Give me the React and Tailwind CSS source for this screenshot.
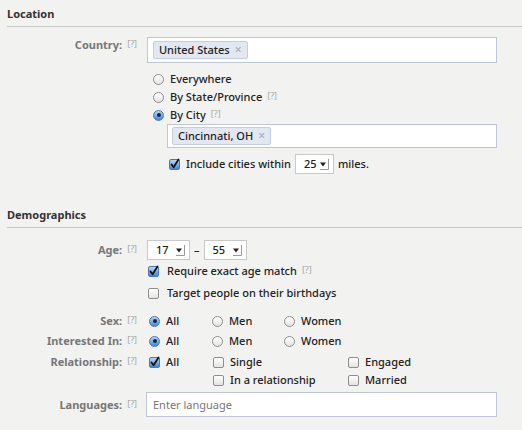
import React from 'react';

const Help = () => (
  <span className="ml-[5px] text-[9px] leading-none font-normal text-[#a8a8a8] relative -top-[2px]">[?]</span>
);

const Radio = ({ checked }) =>
  checked ? (
    <span className="w-[11px] h-[11px] shrink-0 rounded-full border border-[#4a78b8] bg-linear-to-b from-[#b7d6f7] to-[#3f86d8] flex items-center justify-center">
      <span className="w-[4px] h-[4px] rounded-full bg-[#16263a]" />
    </span>
  ) : (
    <span className="w-[11px] h-[11px] shrink-0 rounded-full border border-[#8e8e8e] bg-linear-to-b from-white to-[#e4e4e4]" />
  );

const Check = ({ checked }) =>
  checked ? (
    <span className="w-[11px] h-[11px] shrink-0 rounded-[2px] border border-[#4a78b8] bg-linear-to-b from-[#b7d6f7] to-[#3f86d8] flex items-center justify-center">
      <svg width="11" height="11" viewBox="0 0 11 11" className="overflow-visible">
        <path d="M2.5 5.5 L4.6 8.2 L9.5 0.5" fill="none" stroke="#111" strokeWidth="1.8" strokeLinecap="round" strokeLinejoin="round" />
      </svg>
    </span>
  ) : (
    <span className="w-[11px] h-[11px] shrink-0 rounded-[2px] border border-[#8e8e8e] bg-linear-to-b from-white to-[#e4e4e4]" />
  );

const Arrow = () => (
  <svg width="11" height="13" viewBox="0 0 11 13">
    <path d="M1 4.5 H7 L4 8.5 Z" fill="#222" />
    <path d="M9.5 1 V11.5 H1" fill="none" stroke="#9a9a9a" strokeWidth="1" />
  </svg>
);

const Select = ({ value, w = 'w-[43px]' }) => (
  <div className={`${w} h-[20px] bg-white border border-[#c9c9c9] flex items-center pl-[8px] pr-[3px] justify-between`}>
    <span className="text-[#222]">{value}</span>
    <Arrow />
  </div>
);

const Token = ({ children }) => (
  <span className="h-[18px] px-[5px] flex items-center rounded-[2px] bg-[#e2e7f1] border border-[#c3cce0] text-[#222]">
    {children}
    <span className="ml-[5px] text-[#a3afc8] text-[12px] leading-none">×</span>
  </span>
);

const Label = ({ children, className = '' }) => (
  <div className={`w-[137px] shrink-0 flex justify-end items-baseline ${className}`}>
    <span className="font-bold text-[#777]">{children}</span>
    <Help />
  </div>
);

const Header = ({ children, className = '' }) => (
  <div className={`ml-[7px] pt-[6px] pb-[4px] leading-[16px] border-b border-[#c8c8c8] font-bold text-[#333] ${className}`}>
    {children}
  </div>
);

const Opt = ({ type = 'radio', checked, children, className = '' }) => (
  <div className={`flex items-center gap-[6px] ${className}`}>
    {type === 'radio' ? <Radio checked={checked} /> : <Check checked={checked} />}
    <span>{children}</span>
  </div>
);

export default function App() {
  return (
    <div
      className="w-[522px] h-[430px] overflow-hidden bg-[#f2f2f1] text-[11px] leading-[14px] font-medium text-[#222]"
      style={{ fontFamily: '"Lucida Grande", "Noto Sans", sans-serif' }}
    >
      <Header>Location</Header>

      <div className="flex mt-[10px]">
        <Label className="pt-[1px]">Country:</Label>
        <div className="ml-[10px] w-[350px]">
          <div className="h-[26px] bg-white border border-[#bdc7d8] flex items-center pl-[5px]">
            <Token>United States</Token>
          </div>
          <div className="mt-[7px] ml-[6px]">
            <Opt className="h-[18px]">Everywhere</Opt>
            <Opt className="h-[18px]">
              By State/Province<Help />
            </Opt>
            <Opt className="h-[18px]" checked>
              By City<Help />
            </Opt>
          </div>
          <div className="ml-[20px] w-[330px] h-[24px] bg-white border border-[#bdc7d8] flex items-center pl-[4px]">
            <Token>Cincinnati, OH</Token>
          </div>
          <div className="mt-[6px] ml-[22px] h-[20px] flex items-center">
            <Opt type="check" checked>Include cities within</Opt>
            <div className="ml-[4px]">
              <Select value="25" w="w-[39px]" />
            </div>
            <span className="ml-[4px]">miles.</span>
          </div>
        </div>
      </div>

      <Header className="mt-[27px]">Demographics</Header>

      <div className="flex mt-[12px]">
        <Label className="pt-[3px]">Age:</Label>
        <div className="ml-[10px]">
          <div className="flex items-center">
            <Select value="17" />
            <span className="mx-[4px]">–</span>
            <Select value="55" />
          </div>
          <div className="ml-[1px]">
            <Opt type="check" checked className="h-[22px] gap-[8px]">
              Require exact age match<Help />
            </Opt>
            <Opt type="check" className="h-[22px] gap-[8px]">
              Target people on their birthdays
            </Opt>
          </div>
        </div>
      </div>

      <div className="flex mt-[7px] h-[20px] items-center">
        <Label>Sex:</Label>
        <div className="ml-[12px] flex">
          <Opt checked className="w-[63px]">All</Opt>
          <Opt className="w-[72px]">Men</Opt>
          <Opt>Women</Opt>
        </div>
      </div>

      <div className="flex h-[20px] items-center">
        <Label>Interested In:</Label>
        <div className="ml-[12px] flex">
          <Opt checked className="w-[63px]">All</Opt>
          <Opt className="w-[72px]">Men</Opt>
          <Opt>Women</Opt>
        </div>
      </div>

      <div className="flex mt-[2px]">
        <Label className="h-[18px] items-center">Relationship:</Label>
        <div className="ml-[12px] flex">
          <Opt type="check" checked className="w-[64px] h-[18px] items-center self-start">All</Opt>
          <div className="w-[135px]">
            <Opt type="check" className="h-[18px]">Single</Opt>
            <Opt type="check" className="h-[18px]">In a relationship</Opt>
          </div>
          <div>
            <Opt type="check" className="h-[18px]">Engaged</Opt>
            <Opt type="check" className="h-[18px]">Married</Opt>
          </div>
        </div>
      </div>

      <div className="flex mt-[3px] items-center">
        <Label>Languages:</Label>
        <div className="ml-[9px] w-[351px] h-[25px] bg-white border border-[#bdc7d8] flex items-center pl-[6px] font-normal text-[#777]">
          Enter language
        </div>
      </div>
    </div>
  );
}
